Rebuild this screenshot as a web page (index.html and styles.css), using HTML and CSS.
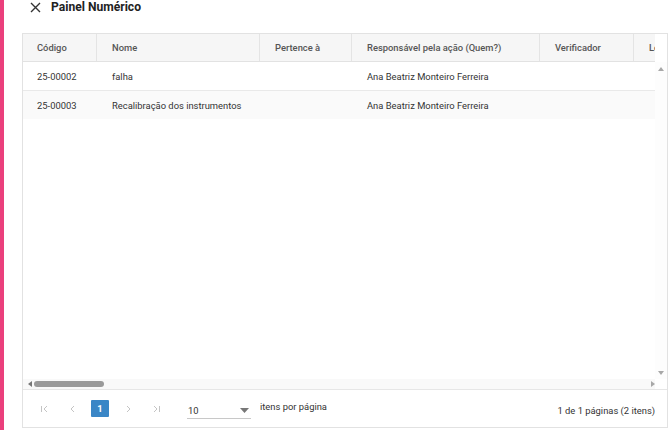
FILE: index.html
```html
<!DOCTYPE html>
<html lang="pt">
<head>
<meta charset="utf-8">
<link rel="stylesheet" href="styles.css">
</head>
<body>
<div class="app">
  <div class="accent"></div>
  <div class="main">
    <div class="title">
      <svg class="close" width="11" height="11" viewBox="0 0 11 11"><path d="M1 1 L10 10 M10 1 L1 10" stroke="#333" stroke-width="1.4" fill="none"/></svg>
      <span>Painel Numérico</span>
    </div>
    <div class="grid">
      <div class="head-wrap">
        <div class="head cols">
          <div class="hc">Código</div>
          <div class="hc">Nome</div>
          <div class="hc">Pertence à</div>
          <div class="hc">Responsável pela ação (Quem?)</div>
          <div class="hc">Verificador</div>
          <div class="hc">Local</div>
        </div>
        <div class="corner"></div>
      </div>
      <div class="body-wrap">
        <div class="rows">
          <div class="row cols">
            <div class="c">25-00002</div>
            <div class="c">falha</div>
            <div class="c"></div>
            <div class="c">Ana Beatriz Monteiro Ferreira</div>
            <div class="c"></div>
            <div class="c"></div>
          </div>
          <div class="row cols alt">
            <div class="c">25-00003</div>
            <div class="c">Recalibração dos instrumentos</div>
            <div class="c"></div>
            <div class="c">Ana Beatriz Monteiro Ferreira</div>
            <div class="c"></div>
            <div class="c"></div>
          </div>
        </div>
        <div class="vscroll">
          <svg width="6" height="4" viewBox="0 0 6 4"><path d="M0 4 L3 0 L6 4 Z" fill="#a8a8a8"/></svg>
          <svg width="6" height="4" viewBox="0 0 6 4"><path d="M0 0 L3 4 L6 0 Z" fill="#a8a8a8"/></svg>
        </div>
      </div>
      <div class="hscroll">
        <svg width="4" height="6" viewBox="0 0 4 6"><path d="M4 0 L0 3 L4 6 Z" fill="#777"/></svg>
        <div class="track"><div class="thumb"></div></div>
        <svg width="4" height="6" viewBox="0 0 4 6"><path d="M0 0 L4 3 L0 6 Z" fill="#a8a8a8"/></svg>
        <div class="hcorner"></div>
      </div>
      <div class="pager">
        <div class="nav">
          <span class="pbtn"><svg width="9" height="8" viewBox="0 0 9 8"><path d="M1.5 1 V7 M7 1 L4 4 L7 7" stroke="#c4c4c4" stroke-width="1" fill="none"/></svg></span>
          <span class="pbtn"><svg width="9" height="8" viewBox="0 0 9 8"><path d="M6 1 L3 4 L6 7" stroke="#c4c4c4" stroke-width="1" fill="none"/></svg></span>
          <span class="pbtn active">1</span>
          <span class="pbtn"><svg width="9" height="8" viewBox="0 0 9 8"><path d="M3 1 L6 4 L3 7" stroke="#c4c4c4" stroke-width="1" fill="none"/></svg></span>
          <span class="pbtn"><svg width="9" height="8" viewBox="0 0 9 8"><path d="M2 1 L5 4 L2 7 M7.5 1 V7" stroke="#c4c4c4" stroke-width="1" fill="none"/></svg></span>
        </div>
        <div class="select">
          <span>10</span>
          <svg width="9" height="5" viewBox="0 0 9 5"><path d="M0 0 L4.5 5 L9 0 Z" fill="#777"/></svg>
        </div>
        <div class="perpage">itens por página</div>
        <div class="info">1 de 1 páginas (2 itens)</div>
      </div>
    </div>
  </div>
</div>
</body>
</html>
```

FILE: styles.css
```css
* { box-sizing: border-box; }
html, body { margin: 0; padding: 0; background: #fff; }
body {
  font-family: Roboto, "Liberation Sans", sans-serif;
  color: #333;
  font-size: 9.4px;
}
.app {
  display: flex;
  height: 430px;
  width: 670px;
  overflow: hidden;
}
.accent {
  width: 4px;
  background: #ea3f7c;
  flex: none;
}
.main {
  flex: 1;
  min-width: 0;
  padding-left: 18px;
  padding-right: 2px;
  display: flex;
  flex-direction: column;
}
.title {
  height: 33px;
  flex: none;
  display: flex;
  align-items: flex-start;
  padding-left: 8px;
  font-size: 12.1px;
  font-weight: 700;
  color: #222;
  line-height: 15px;
}
.title .close {
  margin-top: 2px;
  margin-right: 10px;
}
.grid {
  height: 395px;
  flex: none;
  min-width: 0;
  border: 1px solid #e2e2e2;
  display: flex;
  flex-direction: column;
  overflow: hidden;
}
.head-wrap {
  display: flex;
  height: 28px;
  flex: none;
  min-width: 0;
}
.cols {
  display: grid;
  grid-template-columns: 73px 163px 92px 188px 94px 90px;
}
.head {
  flex: 1;
  min-width: 0;
  overflow: hidden;
  background: #f6f6f6;
  border-bottom: 1px solid #e2e2e2;
}
.corner {
  width: 12px;
  flex: none;
  background: #fff;
}
.hc {
  padding-left: 15px;
  line-height: 27px;
  font-weight: 500;
  color: #555;
  white-space: nowrap;
  border-left: 1px solid #e4e4e4;
}
.hc:first-child { padding-left: 14px; border-left: none; }
.body-wrap {
  flex: 1;
  display: flex;
  min-height: 0;
  min-width: 0;
}
.rows {
  flex: 1;
  min-width: 0;
  overflow: hidden;
}
.row {
  height: 29px;
  border-bottom: 1px solid #e9e9e9;
  align-items: center;
}
.row.alt {
  background: #fafafa;
  border-bottom: none;
  height: 28px;
}
.c {
  padding-left: 16px;
  white-space: nowrap;
  color: #333;
}
.c:first-child { padding-left: 14px; }
.vscroll {
  width: 12px;
  flex: none;
  display: flex;
  flex-direction: column;
  justify-content: space-between;
  align-items: center;
  padding: 5px 0 4px;
  background: #fdfdfd;
}
.hscroll {
  height: 10px;
  flex: none;
  display: flex;
  align-items: center;
  padding-left: 5px;
  background: #f9f9f9;
}
.hscroll .track {
  flex: 1;
  padding-left: 2px;
  margin-right: 5px;
}
.thumb {
  width: 70px;
  height: 6px;
  border-radius: 3px;
  background: #9a9a9a;
}
.hcorner {
  width: 12px;
  flex: none;
  align-self: stretch;
  background: #fff;
}
.pager {
  height: 38px;
  flex: none;
  border-top: 1px solid #e6e6e6;
  display: flex;
  align-items: center;
  padding-left: 12px;
  padding-right: 12px;
}
.nav {
  display: flex;
  gap: 10px;
}
.pbtn {
  width: 18px;
  height: 17px;
  display: flex;
  align-items: center;
  justify-content: center;
}
.pbtn.active {
  background: #3a86c6;
  color: #fff;
  font-weight: 700;
  border-radius: 1px;
}
.select {
  margin-left: 22px;
  width: 64px;
  height: 19px;
  border-bottom: 1px solid #c8c8c8;
  display: flex;
  align-items: center;
  justify-content: space-between;
  padding: 2px 2px 0 1px;
  margin-top: 2px;
}
.perpage {
  margin-left: 9px;
  margin-bottom: 5px;
  color: #333;
}
.info {
  margin-left: auto;
  color: #333;
  margin-top: 3px;
}
```
